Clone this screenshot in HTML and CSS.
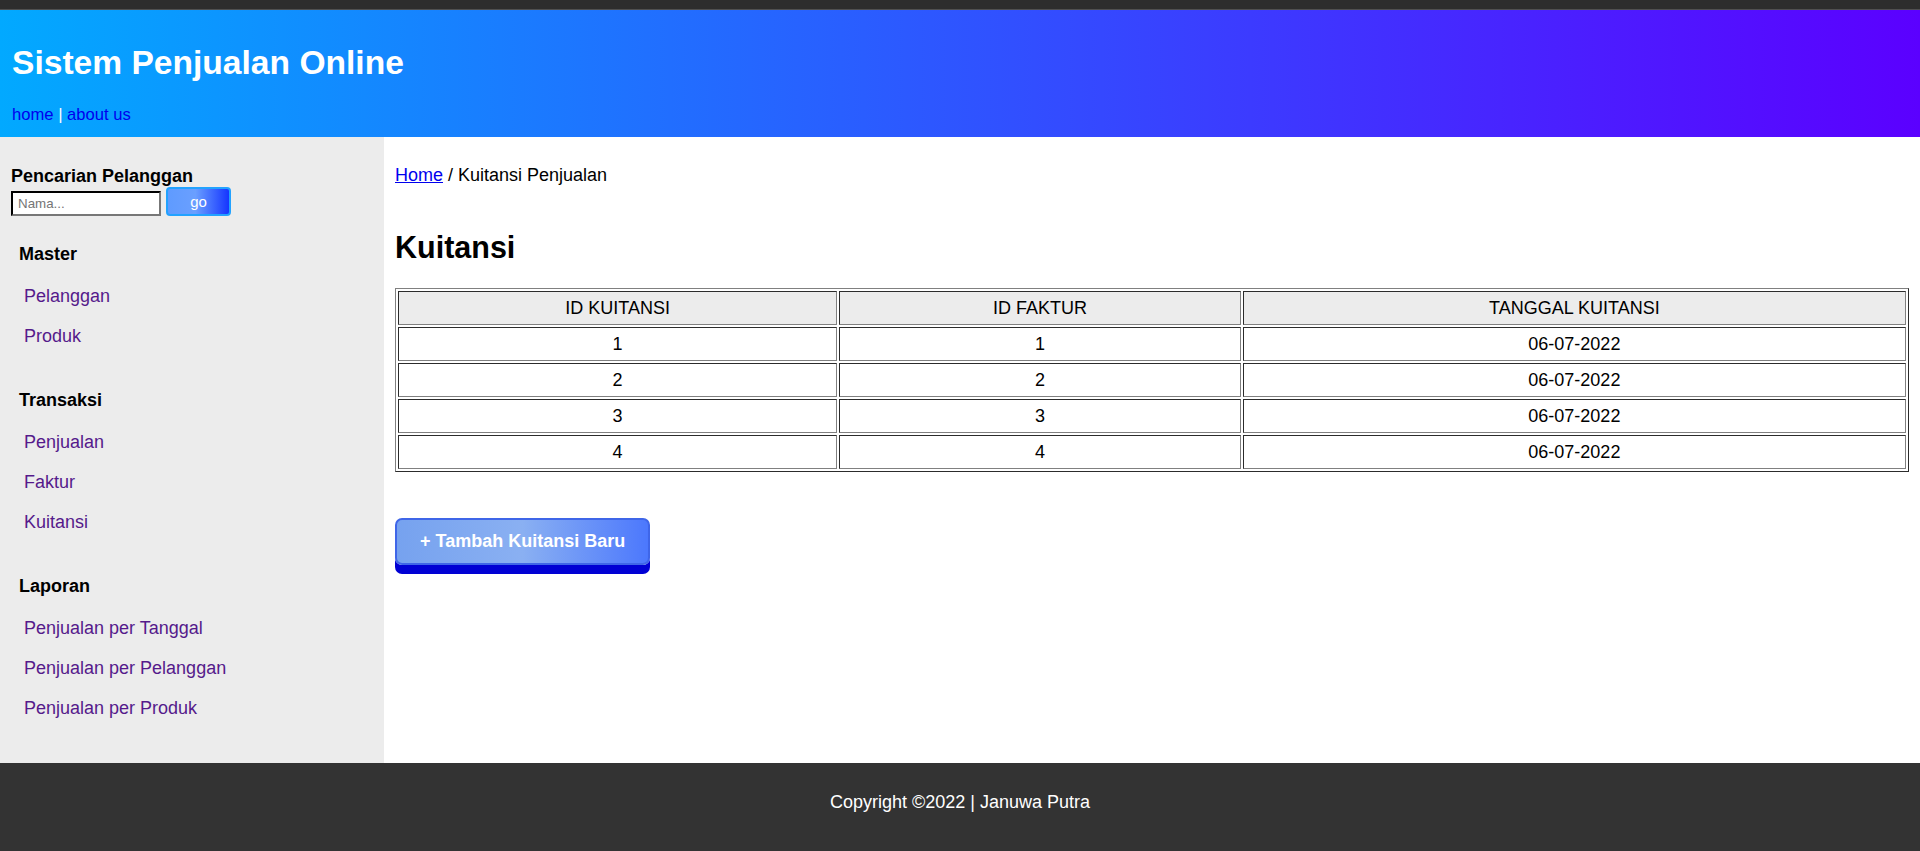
FILE: index.html
```html
<!DOCTYPE html>
<html lang="id">
<head>
<meta charset="utf-8">
<title>Sistem Penjualan Online</title>
<link rel="stylesheet" href="styles.css">
</head>
<body>
<div class="topstrip"></div>
<header class="header">
  <h1 class="title">Sistem Penjualan Online</h1>
  <nav class="topnav"><a href="#">home</a> <span class="sep">|</span> <a href="#">about us</a></nav>
</header>
<div class="layout">
  <aside class="sidebar">
    <div class="search-title">Pencarian Pelanggan</div>
    <form class="search-row">
      <input class="search-input" type="text" placeholder="Nama...">
      <button class="go-btn" type="button">go</button>
    </form>
    <div class="group group-first">
      <div class="group-title">Master</div>
      <a class="side-link" href="#">Pelanggan</a>
      <a class="side-link" href="#">Produk</a>
    </div>
    <div class="group">
      <div class="group-title">Transaksi</div>
      <a class="side-link" href="#">Penjualan</a>
      <a class="side-link" href="#">Faktur</a>
      <a class="side-link" href="#">Kuitansi</a>
    </div>
    <div class="group">
      <div class="group-title">Laporan</div>
      <a class="side-link" href="#">Penjualan per Tanggal</a>
      <a class="side-link" href="#">Penjualan per Pelanggan</a>
      <a class="side-link" href="#">Penjualan per Produk</a>
    </div>
  </aside>
  <main class="main">
    <p class="crumb"><a href="#">Home</a> / Kuitansi Penjualan</p>
    <h2 class="page-title">Kuitansi</h2>
    <table class="data">
      <thead>
        <tr><th class="c1">ID KUITANSI</th><th class="c2">ID FAKTUR</th><th class="c3">TANGGAL KUITANSI</th></tr>
      </thead>
      <tbody>
        <tr><td>1</td><td>1</td><td>06-07-2022</td></tr>
        <tr><td>2</td><td>2</td><td>06-07-2022</td></tr>
        <tr><td>3</td><td>3</td><td>06-07-2022</td></tr>
        <tr><td>4</td><td>4</td><td>06-07-2022</td></tr>
      </tbody>
    </table>
    <div class="actions"><a class="add-btn" href="#">+ Tambah Kuitansi Baru</a></div>
  </main>
</div>
<footer class="footer">Copyright ©2022 | Januwa Putra</footer>
</body>
</html>
```

FILE: styles.css
```css
html, body {
  margin: 0;
  padding: 0;
}
body {
  font-family: "Liberation Sans", Arial, sans-serif;
  color: #000;
  background: #333;
}
.topstrip {
  height: 9px;
  background: #2d2d2d;
  border-bottom: 1px solid #505050;
}
.header {
  background: linear-gradient(to right, #02a9ff 0%, #5b00ff 100%);
  padding: 32.5px 12px 13.5px;
  height: 127px;
  box-sizing: border-box;
}
.title {
  margin: 0;
  font-size: 33.6px;
  line-height: 39px;
  font-weight: bold;
  color: #fff;
}
.topnav {
  margin-top: 23px;
  font-size: 16.6px;
  line-height: 19px;
  color: #fff;
}
.topnav a {
  color: #0000ee;
  text-decoration: none;
}
.layout {
  display: flex;
  align-items: stretch;
  background: #fff;
}
.sidebar {
  width: 384px;
  flex: 0 0 384px;
  box-sizing: border-box;
  background: #ececec;
  padding: 28.5px 11px 35px;
}
.search-title {
  font-size: 18px;
  line-height: 21px;
  font-weight: bold;
}
.search-row {
  display: flex;
  align-items: flex-end;
  gap: 5px;
  margin: 0;
}
.search-input {
  width: 150px;
  height: 25px;
  box-sizing: border-box;
  border: 2px inset #767676;
  border-top-color: #222;
  border-left-color: #222;
  border-right-color: #777;
  border-bottom-color: #777;
  padding: 0 5px;
  font-family: "Liberation Sans", Arial, sans-serif;
  font-size: 13.33px;
  background: #fff;
  margin: 0;
  outline: none;
}
.search-input::placeholder {
  color: #757575;
}
.go-btn {
  width: 65px;
  height: 29px;
  box-sizing: border-box;
  border: 2px solid #22a2ff;
  border-radius: 4px;
  background: linear-gradient(to right, #5f9bff 0%, #6a9fff 45%, #1535ff 100%);
  color: #fff;
  font-family: "Liberation Sans", Arial, sans-serif;
  font-size: 15px;
  padding: 0;
  margin: 0;
}
.group {
  margin-top: 33.5px;
}
.group-first {
  margin-top: 28px;
}
.group-title {
  font-size: 18px;
  line-height: 21px;
  font-weight: bold;
  padding-left: 8px;
  margin-bottom: 11.5px;
}
.side-link {
  display: block;
  font-size: 18px;
  line-height: 21px;
  padding: 9.5px 0 9.5px 13px;
  color: #551a8b;
  text-decoration: none;
}
.main {
  flex: 1 1 auto;
  padding: 28px 11px;
  min-width: 0;
}
.crumb {
  margin: 0;
  font-size: 18px;
  line-height: 21px;
}
.crumb a {
  color: #0000ee;
  text-decoration: underline;
}
.page-title {
  margin: 44px 0 24px;
  font-size: 30.5px;
  line-height: 34px;
  font-weight: bold;
}
.data {
  width: 100%;
  border: 1px outset #808080;
  border-spacing: 2px;
  font-size: 18px;
}
.data th,
.data td {
  border: 1px inset #808080;
  padding: 5px 2px;
  line-height: 22px;
  text-align: center;
  font-weight: normal;
}
.data th {
  background: #ececec;
}
.c1 { width: 29.2%; }
.c2 { width: 26.7%; }
.c3 { width: 44.1%; }
.actions {
  margin-top: 45.5px;
}
.add-btn {
  display: inline-block;
  padding: 11px 23px;
  border: 2px solid #3f66e8;
  border-radius: 7px;
  background: linear-gradient(to right, #76a2ef 0%, #8ab0f2 50%, #4c78fd 100%);
  box-shadow: 0 9px 0 #0000d4;
  color: #fff;
  font-size: 18px;
  line-height: 21px;
  font-weight: bold;
  text-decoration: none;
}
.footer {
  background: #333;
  color: #fff;
  text-align: center;
  font-size: 18px;
  line-height: 21px;
  padding: 28.5px 0 39px;
}
```
